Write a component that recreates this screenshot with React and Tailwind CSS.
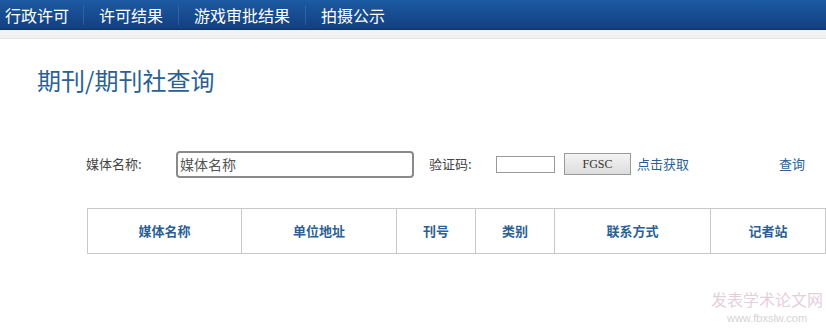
import React from 'react';

const font = { fontFamily: '"Noto Sans CJK SC", "Liberation Sans", sans-serif' };

export default function App() {
  const navItems = ['行政许可', '许可结果', '游戏审批结果', '拍摄公示'];
  const cols = [
    { label: '媒体名称', w: 'w-[154px]' },
    { label: '单位地址', w: 'w-[155px]' },
    { label: '刊号', w: 'w-[79px]' },
    { label: '类别', w: 'w-[79px]' },
    { label: '联系方式', w: 'w-[156px]' },
    { label: '记者站', w: 'w-[116px] border-r' },
  ];

  return (
    <div className="w-[826px] h-[331px] bg-white overflow-hidden relative" style={font}>
      {/* Top nav */}
      <div className="h-[30px] bg-gradient-to-b from-[#1c5aa3] to-[#133f80] border-b border-[#0e3266] flex items-center">
        {navItems.map((item, i) => (
          <div key={item} className="flex items-center">
            {i > 0 && <div className="w-px h-[20px] bg-[#3a6aa8] opacity-70" />}
            <span className={`text-white text-[16px] leading-none ${i === 0 ? 'pl-[5px] pr-[14px]' : 'px-[15px]'}`}>{item}</span>
          </div>
        ))}
      </div>
      <div className="h-[9px] bg-[#f2f2f2] border-b border-[#e4e4e4]" />

      {/* Title */}
      <h1 className="pl-[37px] pt-[25px] text-[24px] leading-[32px] text-[#2b5f95] font-normal">期刊/期刊社查询</h1>

      {/* Search form */}
      <div className="mt-[54px] h-[28px] flex items-center text-[13px]">
        <span className="ml-[86px] w-[90px] text-[#444]">媒体名称:</span>
        <div className="w-[238px] h-[27px] border-2 border-[#8a8a8a] rounded-[4px] flex items-center px-[2px] text-[14px] text-[#555]">媒体名称</div>
        <span className="ml-[15px] w-[67px] text-[#444]">验证码:</span>
        <div className="w-[59px] h-[17px] border border-[#999] bg-white" />
        <div className="ml-[9px] w-[67px] h-[22px] border border-[#9a9a9a] bg-gradient-to-b from-[#f4f4f4] to-[#dcdcdc] flex items-center justify-center text-[12px] text-[#333]" style={{ fontFamily: '"Liberation Serif", serif' }}>FGSC</div>
        <span className="ml-[6px] text-[#2b5f95]">点击获取</span>
        <span className="ml-[90px] text-[#2b5f95]">查询</span>
      </div>

      {/* Table header */}
      <div className="mt-[30px] ml-[87px] flex h-[46px] border-t border-b border-[#c8c8c8] w-max">
        {cols.map((c) => (
          <div key={c.label} className={`${c.w} shrink-0 border-l border-[#c8c8c8] flex items-center justify-center text-[13px] font-bold text-[#2b5f95]`}>
            {c.label}
          </div>
        ))}
      </div>

      {/* Watermark */}
      <div className="absolute left-[711px] top-[290px] flex flex-col items-center gap-[3px] opacity-50">
        <span className="block h-[19px] text-[16px] leading-[19px] text-[#c9a3b8]">发表学术论文网</span>
        <span className="block h-[13px] text-[11px] leading-[13px] text-[#aaa]" style={{ fontFamily: '"Liberation Sans", sans-serif' }}>www.fbxslw.com</span>
      </div>
    </div>
  );
}
